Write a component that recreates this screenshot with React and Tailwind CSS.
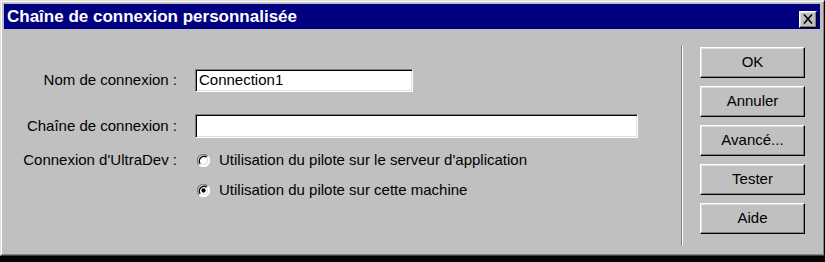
const raised =
  "border border-t-white border-l-white border-r-black border-b-black shadow-[inset_-1px_-1px_0_#808080,inset_1px_1px_0_#dfdfdf]";
const sunken =
  "border border-t-[#808080] border-l-[#808080] border-r-white border-b-white shadow-[inset_1px_1px_0_#000,inset_-1px_-1px_0_#dfdfdf]";

function Radio({ checked }) {
  return (
    <svg width="13" height="13" viewBox="0 0 12 12" className="shrink-0">
      <circle cx="6" cy="6" r="5.5" fill="#fff" />
      <path d="M10 2 A5.5 5.5 0 0 0 2 10" fill="none" stroke="#808080" strokeWidth="1.2" />
      <path d="M9 3 A4.3 4.3 0 0 0 3 9" fill="none" stroke="#000" strokeWidth="1.2" />
      <path d="M2 10 A5.5 5.5 0 0 0 10 2" fill="none" stroke="#fff" strokeWidth="1" />
      <path d="M3 9 A4.3 4.3 0 0 0 9 3" fill="none" stroke="#dfdfdf" strokeWidth="1" />
      {checked && <circle cx="6" cy="6" r="2" fill="#000" />}
    </svg>
  );
}

function Button({ children }) {
  return (
    <button
      type="button"
      className={`flex h-[31px] w-[105px] items-center justify-center bg-[#c0c0c0] text-[15px] text-black ${raised}`}
    >
      {children}
    </button>
  );
}

export default function App() {
  return (
    <div
      className="h-[262px] w-[825px] bg-black"
      style={{ fontFamily: '"Liberation Sans", Arial, sans-serif' }}
    >
      <div className="h-[256px] w-[825px] border border-t-[#dfdfdf] border-l-[#dfdfdf] border-r-black border-b-[#404040] bg-[#c0c0c0]">
        <div className="flex h-full flex-col border border-t-white border-l-white border-r-[#808080] border-b-[#808080] pl-[2px] pr-[3px] pt-[2px]">
          {/* title bar */}
          <div className="flex h-[25px] items-center justify-between bg-[#000080] pl-[3px] pr-[3px]">
            <span className="text-[17px] font-bold leading-none text-white">
              Chaîne de connexion personnalisée
            </span>
            <div className={`mt-[5px] flex h-[17px] w-[18px] items-center justify-center bg-[#c0c0c0] ${raised}`}>
              <svg width="10" height="10" viewBox="0 0 10 10">
                <path d="M1 0.5 L9 9.5 M9 0.5 L1 9.5" stroke="#000" strokeWidth="1.6" />
              </svg>
            </div>
          </div>

          {/* body */}
          <div className="flex flex-1">
            <div className="flex w-[677px] flex-col pt-[40px] text-[15px] text-black">
              <div className="flex h-[23px] items-center">
                <span className="w-[173px] text-right">Nom de connexion :</span>
                <div className={`ml-[18px] flex h-[23px] w-[218px] items-center bg-white px-[3px] ${sunken}`}>
                  Connection1
                </div>
              </div>

              <div className="mt-[22px] flex h-[24px] items-center">
                <span className="w-[173px] text-right">Chaîne de connexion :</span>
                <div className={`ml-[18px] h-[24px] w-[443px] bg-white ${sunken}`} />
              </div>

              <div className="mt-[13px] flex h-[18px] items-center">
                <span className="w-[173px] text-right">Connexion d'UltraDev :</span>
                <div className="ml-[20px] flex items-center gap-[9px]">
                  <Radio />
                  <span>Utilisation du pilote sur le serveur d'application</span>
                </div>
              </div>

              <div className="mt-[12px] flex h-[18px] items-center">
                <div className="ml-[193px] flex items-center gap-[9px]">
                  <Radio checked />
                  <span>Utilisation du pilote sur cette machine</span>
                </div>
              </div>
            </div>

            <div className="mt-[17px] h-[200px] w-[2px] border-l border-r border-l-[#808080] border-r-white" />

            <div className="ml-[17px] mt-[18px] flex flex-col gap-[8px]">
              <Button>OK</Button>
              <Button>Annuler</Button>
              <Button>Avancé...</Button>
              <Button>Tester</Button>
              <Button>Aide</Button>
            </div>
          </div>
        </div>
      </div>
    </div>
  );
}
